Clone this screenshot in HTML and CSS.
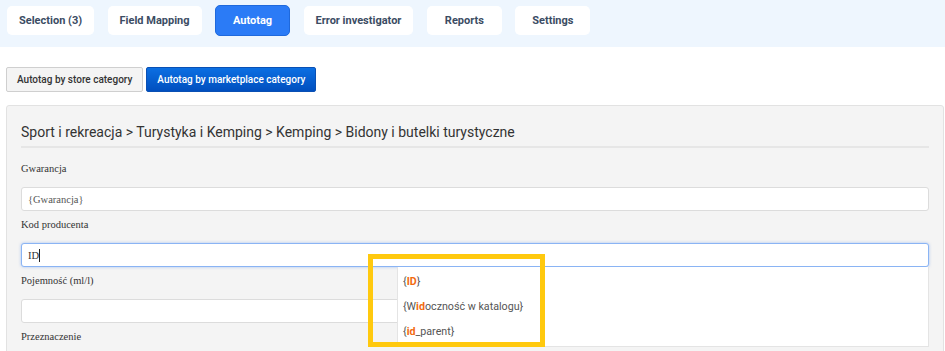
FILE: index.html
```html
<!DOCTYPE html>
<html lang="en">
<head>
  <meta charset="UTF-8">
  <title>Autotag</title>
  <link rel="stylesheet" href="styles.css">
</head>
<body>
  <!-- Main tabs -->
  <nav class="tabbar">
    <a href="#" class="tab">Selection (3)</a>
    <a href="#" class="tab">Field Mapping</a>
    <a href="#" class="tab tab-active">Autotag</a>
    <a href="#" class="tab">Error investigator</a>
    <a href="#" class="tab">Reports</a>
    <a href="#" class="tab">Settings</a>
  </nav>

  <div class="content">
    <div class="mode-switch">
      <button class="mode-btn">Autotag by store category</button>
      <button class="mode-btn mode-btn-active">Autotag by marketplace category</button>
    </div>

    <section class="panel">
      <h2 class="panel-title">Sport i rekreacja &gt; Turystyka i Kemping &gt; Kemping &gt; Bidony i butelki turystyczne</h2>

      <div class="field">
        <label class="field-label">Gwarancja</label>
        <div class="field-input">{Gwarancja}</div>
      </div>

      <div class="field">
        <label class="field-label">Kod producenta</label>
        <div class="field-wrap">
          <div class="field-input field-input-focus">ID<span class="caret"></span></div>
          <ul class="suggest">
            <li>{<b>ID</b>}</li>
            <li>{W<b>id</b>oczność w katalogu}</li>
            <li>{<b>id</b>_parent}</li>
          </ul>
        </div>
      </div>

      <div class="field">
        <label class="field-label">Pojemność (ml/l)</label>
        <div class="field-input"></div>
      </div>

      <div class="field">
        <label class="field-label">Przeznaczenie</label>
        <div class="field-input"></div>
      </div>
    </section>
  </div>

  <!-- highlight marker -->
  <div class="highlight"></div>
</body>
</html>
```

FILE: styles.css
```css
/* Base */
* {
  margin: 0;
  padding: 0;
  box-sizing: border-box;
}

html, body {
  height: 351px;
  overflow: hidden;
}

body {
  background: white;
  font-family: 'Roboto', 'Liberation Sans', sans-serif;
  color: #333;
}

/* Tabs */
.tabbar {
  display: flex;
  gap: 13.5px;
  height: 47px;
  padding: 6px 7px 0;
  background-color: #eef6fe;
}

.tab {
  display: flex;
  align-items: center;
  justify-content: center;
  height: 29px;
  min-width: 75px;
  padding: 0 12px;
  background-color: white;
  border-radius: 5px;
  font-size: 11px;
  font-weight: 700;
  color: #3b4c63;
  text-decoration: none;
}

.tab-active {
  height: 31px;
  margin-top: -1px;
  background-color: #2b7bf6;
  border: 1px solid #1f69dc;
  color: white;
}

.content {
  padding: 20px 1px 0 6px;
}

/* Store / marketplace switch */
.mode-switch {
  display: flex;
  gap: 3px;
}

.mode-btn {
  height: 25px;
  padding: 0 10px;
  border: 1px solid #cfcfcf;
  border-radius: 2px;
  background-color: #f4f4f4;
  font-family: 'Roboto', 'Liberation Sans', sans-serif;
  font-size: 10px;
  font-weight: 500;
  color: #333;
}

.mode-btn-active {
  border-color: #0a50b4;
  background-image: linear-gradient(#0c6fe2, #004fbf);
  color: white;
}

/* Panel */
.panel {
  margin-top: 13px;
  padding: 15px 14px 20px;
  background-color: #f4f4f4;
  border: 1px solid #e2e2e2;
  border-radius: 3px;
}

.panel-title {
  padding-bottom: 3px;
  border-bottom: 2px solid #e6e6e6;
  font-family: 'Roboto', 'Liberation Sans', sans-serif;
  font-size: 14px;
  font-weight: 400;
  line-height: 22px;
  color: #333;
}

.field {
  display: flex;
  flex-direction: column;
}

.field:first-of-type {
  margin-top: 13px;
}

.field-label {
  margin-bottom: 10px;
  font-family: 'Liberation Serif', serif;
  font-size: 10.5px;
  line-height: 16px;
  color: #333;
}

.field-wrap {
  position: relative;
}

.field-input {
  display: flex;
  align-items: center;
  height: 24px;
  margin-bottom: 6px;
  padding: 0 6px;
  background-color: white;
  border: 1px solid #dcdcdc;
  border-radius: 3px;
  font-family: 'Liberation Serif', serif;
  font-size: 10.5px;
  color: #555;
}

.field-input-focus {
  border-color: #8ab4f4;
  box-shadow: 0 0 3px rgba(90, 145, 240, 0.5);
  color: #333;
}

.caret {
  display: inline-block;
  width: 1px;
  height: 13px;
  background-color: #222;
}

/* Suggestions dropdown */
.suggest {
  position: absolute;
  top: 24px;
  left: 376px;
  right: 0;
  padding: 2px 0;
  list-style: none;
  background-color: white;
  border: 1px solid #e4e4e4;
  border-top: none;
  z-index: 5;
}

.suggest li {
  height: 25px;
  line-height: 25px;
  padding-left: 5px;
  font-family: 'Roboto', 'Liberation Sans', sans-serif;
  font-size: 10.7px;
  color: #555;
}

.suggest b {
  color: #f26a10;
  font-weight: 700;
}

/* Yellow marker box */
.highlight {
  position: absolute;
  left: 368px;
  top: 254px;
  width: 177px;
  height: 93px;
  border: 5px solid #ffc90e;
  z-index: 10;
}
```
